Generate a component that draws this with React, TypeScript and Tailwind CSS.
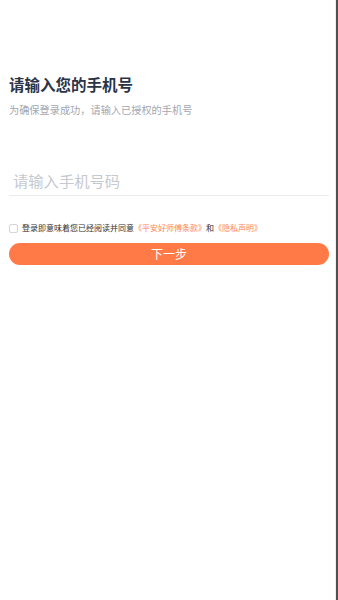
import { useState } from 'react';

export default function App() {
  const [phone, setPhone] = useState('');
  const [agreed, setAgreed] = useState(false);

  return (
    <div
      className="flex h-[600px] w-[338px] bg-white"
      style={{ fontFamily: '"Noto Sans CJK SC", "Noto Sans", sans-serif' }}
    >
      <div className="flex-1 border-r border-[#f0f0f0] pl-[9px] pr-[6px]">
        {/* Heading */}
        <h1 className="mt-[73px] text-[15.5px] font-bold leading-[22px] text-[#2b3447]">请输入您的手机号</h1>
        <p className="mt-[8px] text-[10.2px] leading-[14px] text-[#a3a7b0]">为确保登录成功，请输入已授权的手机号</p>

        {/* Phone input */}
        <div className="mt-[51px] border-b border-[#ebebeb] pb-[3px] pl-[4px]">
          <input
            type="tel"
            value={phone}
            onChange={(e) => setPhone(e.target.value)}
            placeholder="请输入手机号码"
            className="h-[24px] w-full bg-transparent text-[15.3px] text-[#333] outline-none placeholder:text-[#c6c9ce]"
          />
        </div>

        {/* Agreement */}
        <div className="mt-[27px] flex items-center">
          <button
            onClick={() => setAgreed(!agreed)}
            className={`h-[9px] w-[9px] rounded-[2px] border ${agreed ? 'border-[#ff7a45] bg-[#ff7a45]' : 'border-[#d6d6d6] bg-white'}`}
          />
          <p className="ml-[4px] whitespace-nowrap text-[8px] leading-[10px] text-[#333]">
            登录即意味着您已经阅读并同意
            <span className="text-[#ff8656]">《平安好师傅条款》</span>和
            <span className="text-[#ff8656]">《隐私声明》</span>
          </p>
        </div>

        {/* Next */}
        <button className="mt-[10px] flex h-[22px] w-full items-center justify-center rounded-full bg-[#ff7a47] text-[12px] text-white">
          下一步
        </button>
      </div>
      <div className="w-[2px] bg-[#505050]" />
    </div>
  );
}
